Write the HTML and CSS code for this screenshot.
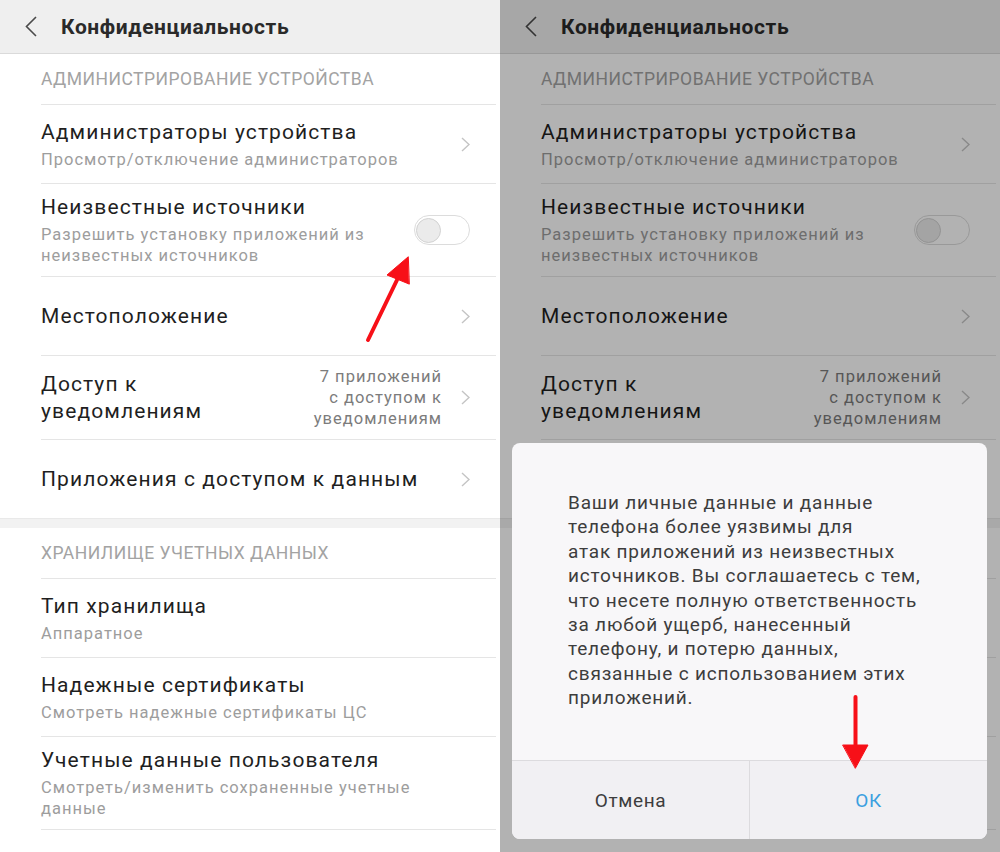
FILE: index.html
```html
<!DOCTYPE html>
<html lang="ru">
<head>
    <meta charset="UTF-8">
    <title>Конфиденциальность</title>
    <link rel="stylesheet" href="styles.css">
</head>
<body>
<div class="screens">
    <!-- экран 1: список настроек -->
    <div class="screen">
        <div class="titlebar">
            <svg class="back" viewBox="0 0 12 21"><polyline points="11,1 1.5,10.5 11,20"/></svg>
            <h1>Конфиденциальность</h1>
        </div>
        <div class="group-title">Администрирование устройства</div>
        <div class="row">
            <div class="row-text">
                <div class="row-title">Администраторы устройства</div>
                <div class="row-sub">Просмотр/отключение администраторов</div>
            </div>
            <svg class="chevron" viewBox="0 0 9 15"><polyline points="1,1 8,7.5 1,14"/></svg>
        </div>
        <div class="row">
            <div class="row-text">
                <div class="row-title">Неизвестные источники</div>
                <div class="row-sub">Разрешить установку приложений из<br>неизвестных источников</div>
            </div>
            <div class="switch"></div>
        </div>
        <div class="row">
            <div class="row-text">
                <div class="row-title">Местоположение</div>
            </div>
            <svg class="chevron" viewBox="0 0 9 15"><polyline points="1,1 8,7.5 1,14"/></svg>
        </div>
        <div class="row">
            <div class="row-text">
                <div class="row-title">Доступ к<br>уведомлениям</div>
            </div>
            <div class="row-value">7 приложений<br>с доступом к<br>уведомлениям</div>
            <svg class="chevron" viewBox="0 0 9 15"><polyline points="1,1 8,7.5 1,14"/></svg>
        </div>
        <div class="row">
            <div class="row-text">
                <div class="row-title">Приложения с доступом к данным</div>
            </div>
            <svg class="chevron" viewBox="0 0 9 15"><polyline points="1,1 8,7.5 1,14"/></svg>
        </div>
        <div class="gap"></div>
        <div class="group-title">Хранилище учетных данных</div>
        <div class="row">
            <div class="row-text">
                <div class="row-title">Тип хранилища</div>
                <div class="row-sub">Аппаратное</div>
            </div>
        </div>
        <div class="row">
            <div class="row-text">
                <div class="row-title">Надежные сертификаты</div>
                <div class="row-sub">Смотреть надежные сертификаты ЦС</div>
            </div>
        </div>
        <div class="row">
            <div class="row-text">
                <div class="row-title">Учетные данные пользователя</div>
                <div class="row-sub">Смотреть/изменить сохраненные учетные<br>данные</div>
            </div>
        </div>
        <div class="row">
            <div class="row-text">
                <div class="row-title">Установить с карты памяти</div>
            </div>
        </div>

        <svg class="arrow arrow--switch" viewBox="0 0 60 95">
            <line x1="13" y1="90" x2="42" y2="30"/>
            <polygon points="53,7 32,25 54,34"/>
        </svg>
    </div>

    <!-- экран 2: тот же список под диалогом -->
    <div class="screen">
        <div class="titlebar">
            <svg class="back" viewBox="0 0 12 21"><polyline points="11,1 1.5,10.5 11,20"/></svg>
            <h1>Конфиденциальность</h1>
        </div>
        <div class="group-title">Администрирование устройства</div>
        <div class="row">
            <div class="row-text">
                <div class="row-title">Администраторы устройства</div>
                <div class="row-sub">Просмотр/отключение администраторов</div>
            </div>
            <svg class="chevron" viewBox="0 0 9 15"><polyline points="1,1 8,7.5 1,14"/></svg>
        </div>
        <div class="row">
            <div class="row-text">
                <div class="row-title">Неизвестные источники</div>
                <div class="row-sub">Разрешить установку приложений из<br>неизвестных источников</div>
            </div>
            <div class="switch"></div>
        </div>
        <div class="row">
            <div class="row-text">
                <div class="row-title">Местоположение</div>
            </div>
            <svg class="chevron" viewBox="0 0 9 15"><polyline points="1,1 8,7.5 1,14"/></svg>
        </div>
        <div class="row">
            <div class="row-text">
                <div class="row-title">Доступ к<br>уведомлениям</div>
            </div>
            <div class="row-value">7 приложений<br>с доступом к<br>уведомлениям</div>
            <svg class="chevron" viewBox="0 0 9 15"><polyline points="1,1 8,7.5 1,14"/></svg>
        </div>
        <div class="row">
            <div class="row-text">
                <div class="row-title">Приложения с доступом к данным</div>
            </div>
            <svg class="chevron" viewBox="0 0 9 15"><polyline points="1,1 8,7.5 1,14"/></svg>
        </div>
        <div class="gap"></div>
        <div class="group-title">Хранилище учетных данных</div>
        <div class="row">
            <div class="row-text">
                <div class="row-title">Тип хранилища</div>
                <div class="row-sub">Аппаратное</div>
            </div>
        </div>
        <div class="row">
            <div class="row-text">
                <div class="row-title">Надежные сертификаты</div>
                <div class="row-sub">Смотреть надежные сертификаты ЦС</div>
            </div>
        </div>
        <div class="row">
            <div class="row-text">
                <div class="row-title">Учетные данные пользователя</div>
                <div class="row-sub">Смотреть/изменить сохраненные учетные<br>данные</div>
            </div>
        </div>
        <div class="row">
            <div class="row-text">
                <div class="row-title">Установить с карты памяти</div>
            </div>
        </div>

        <div class="scrim"></div>
        <div class="dialog">
            <div class="dialog-msg">Ваши личные данные и данные<br>телефона более уязвимы для<br>атак приложений из неизвестных<br>источников. Вы соглашаетесь с тем,<br>что несете полную ответственность<br>за любой ущерб, нанесенный<br>телефону, и потерю данных,<br>связанные с использованием этих<br>приложений.</div>
            <div class="dialog-actions">
                <div class="dialog-btn">Отмена</div>
                <div class="dialog-btn dialog-btn--ok">ОК</div>
            </div>
        </div>

        <svg class="arrow arrow--ok" viewBox="0 0 32 76">
            <line x1="15.5" y1="2" x2="15.5" y2="52"/>
            <polygon points="3,50 28,50 15.5,73"/>
        </svg>
    </div>
</div>
</body>
</html>
```

FILE: styles.css
```css
body {
    margin: 0;
    font-family: Roboto, "Noto Sans", sans-serif;
    background: #fff;
}
.screens {
    display: flex;
    width: 1000px;
    height: 852px;
    overflow: hidden;
}
.screen {
    position: relative;
    flex: none;
    width: 500px;
    overflow: hidden;
    background: #fff;
}

/* шапка */
.titlebar {
    display: flex;
    align-items: center;
    height: 53px;
    background: #efefef;
    border-bottom: 1px solid #dadada;
}
.back {
    width: 12px;
    height: 21px;
    margin-left: 25px;
    fill: none;
    stroke: #4a4a4a;
    stroke-width: 1.6;
}
.titlebar h1 {
    margin: 0 0 0 24px;
    font-size: 21px;
    font-weight: 700;
    color: #2a2a2a;
    letter-spacing: .6px;
}

/* группы и строки */
.group-title {
    height: 50px;
    line-height: 50px;
    padding-left: 41px;
    font-size: 17.5px;
    color: #a3a3a3;
    text-transform: uppercase;
    letter-spacing: .5px;
}
.row {
    display: flex;
    align-items: center;
    box-sizing: border-box;
    min-height: 79px;
    margin: 0 4px 0 41px;
    padding: 10px 26px 10px 0;
    border-top: 1px solid #e5e5e5;
}
.row-text {
    flex: 1;
}
.row-title {
    font-size: 21px;
    line-height: 27px;
    color: #1f1f1f;
    letter-spacing: 1.1px;
}
.row-sub {
    margin-top: 3px;
    font-size: 16.5px;
    line-height: 21px;
    color: #9d9d9d;
    letter-spacing: 1px;
}
.row-value {
    margin-right: 19px;
    text-align: right;
    font-size: 16.5px;
    line-height: 21px;
    color: #7c7c7c;
    letter-spacing: 1px;
}
.chevron {
    width: 9px;
    height: 15px;
    fill: none;
    stroke: #c4c4c4;
    stroke-width: 1.4;
}
.gap {
    height: 9px;
    background: #f2f2f2;
    border-top: 1px solid #e9e9e9;
}

/* переключатель (выкл.) */
.switch {
    display: flex;
    align-items: center;
    box-sizing: border-box;
    width: 56px;
    height: 30px;
    padding: 0 1px;
    border: 1px solid #dcdcdc;
    border-radius: 15px;
    background: #fff;
}
.switch::before {
    content: '';
    width: 25px;
    height: 25px;
    box-sizing: border-box;
    border: 1px solid #d2d2d2;
    border-radius: 50%;
    background: #ebebeb;
}

/* затемнение и диалог */
.scrim {
    position: absolute;
    inset: 0;
    background: rgba(0, 0, 0, .3);
}
.dialog {
    position: absolute;
    left: 12px;
    top: 443px;
    display: flex;
    flex-direction: column;
    width: 475px;
    height: 396px;
    overflow: hidden;
    border-radius: 8px;
    background: #f8f7f9;
}
.dialog-msg {
    flex: 1;
    padding: 48px 0 0 56px;
    font-size: 19px;
    line-height: 24.4px;
    color: #3d3d3d;
    letter-spacing: .8px;
    white-space: nowrap;
}
.dialog-actions {
    display: flex;
    height: 78px;
    border-top: 1px solid #dcdbde;
    background: #f1f0f3;
}
.dialog-btn {
    flex: 1;
    display: flex;
    align-items: center;
    justify-content: center;
    font-size: 19px;
    color: #3d3d3d;
    letter-spacing: .6px;
}
.dialog-btn--ok {
    border-left: 1px solid #dcdbde;
    color: #3a9fe0;
}

/* красные стрелки-подсказки */
.arrow {
    position: absolute;
    fill: #f71018;
    stroke: #f71018;
    stroke-width: 4;
    stroke-linecap: round;
}
.arrow polygon {
    stroke-width: 1;
    stroke-linejoin: round;
}
.arrow--switch {
    left: 355px;
    top: 250px;
    width: 60px;
    height: 95px;
}
.arrow--ok {
    left: 340px;
    top: 695px;
    width: 32px;
    height: 76px;
}
```
